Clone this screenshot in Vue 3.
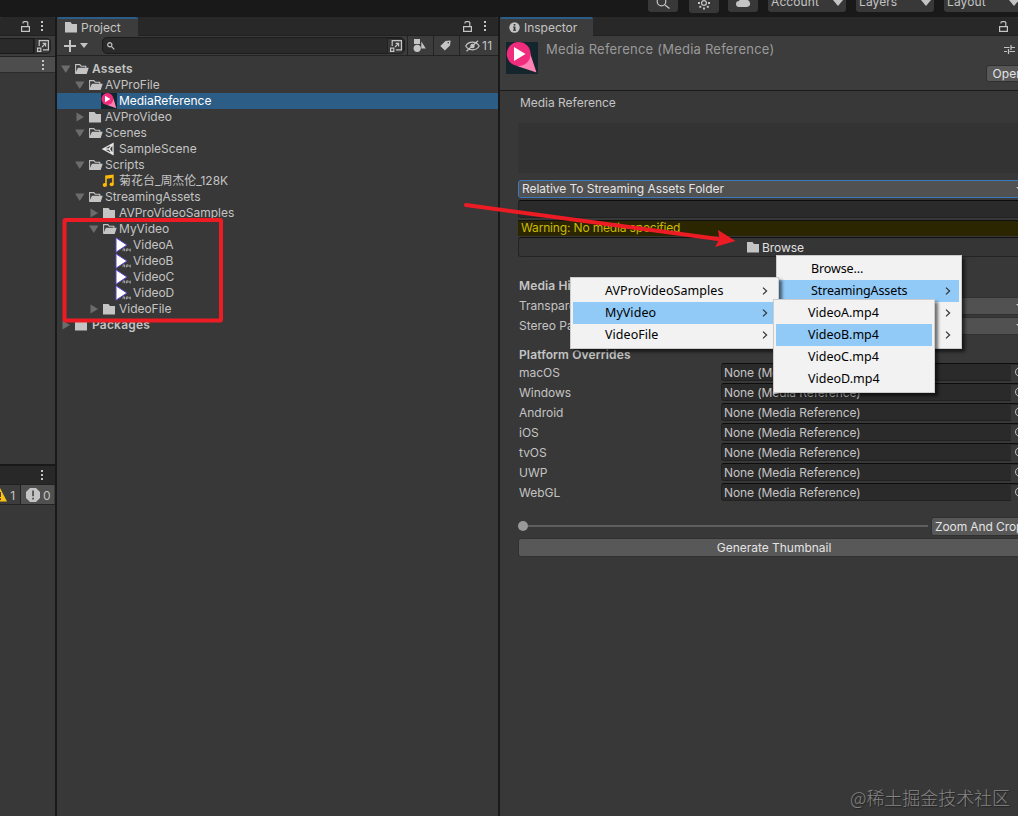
<template>
  <div class="editor">
    <header class="topbar">
      <div class="top-btn"><svg width="30" height="13"><circle cx="13.5" cy="1.5" r="4.3" /><path d="M17 5l4.5 3.5" /></svg></div>
      <div class="top-btn gear">
        <svg width="30" height="13">
          <circle cx="15" cy="3" r="2.4" />
          <g class="fill"><rect x="14" y="7.5" width="2" height="2" /><rect x="9" y="2" width="2" height="2" /><rect x="19" y="2" width="2" height="2" /><rect x="10.3" y="5.8" width="2" height="2" /><rect x="17.8" y="5.8" width="2" height="2" /></g>
        </svg>
      </div>
      <div class="top-btn cloud"><svg width="30" height="12"><path class="fill" d="M11 7a3 3 0 0 1 0-6 4 4 0 0 1 7-1 3.5 3.5 0 0 1 1 7z" /></svg></div>
      <div v-for="label in topMenus" :key="label" class="top-drop">
        <span>{{ label }}</span><i class="caret"></i>
      </div>
    </header>

    <main class="panels">
      <section class="side">
        <div class="strip side-strip">
          <svg class="lock" viewBox="0 0 9 11"><path d="M.6 5.6h7.8v4.8H.6zM2 2.5V1.8q0-1.2 1.2-1.2h2.4q1.2 0 1.2 1.2v3.8" /></svg>
          <i class="kebab"></i>
        </div>
        <div class="side-tools">
          <div class="side-field"></div>
          <div class="pop-btn"><svg class="pop" viewBox="0 0 12 12"><path d="M2.2 6V.6h9.2v9.2H6M.6 8.2h3.2v3.2H.6zM5 7l3.6-3.6M5.6 3.4h3v3" /></svg></div>
        </div>
        <div class="side-row"><i class="kebab"></i></div>
        <div class="side-body"></div>
        <div class="strip console-strip"><i class="kebab"></i></div>
        <div class="console-bar">
          <div class="warn-count">
            <svg width="14" height="14" viewBox="0 0 14 14"><path d="M7 0l7 13.5H0z" fill="#fcc111" /><path d="M6.2 4h1.7v5H6.2zM6.2 10.2h1.7v1.7H6.2z" fill="#333" /></svg>
            <span>1</span>
          </div>
          <div class="err-count">
            <svg width="14" height="14" viewBox="0 0 14 14"><path d="M4 0h6l4 4v6l-4 4H4L0 10V4z" fill="#c4c4c4" /><path d="M6.2 2.5h1.7v5.8H6.2zM6.2 9.8h1.7v1.8H6.2z" fill="#4a4a4a" /></svg>
            <span>0</span>
          </div>
        </div>
        <div class="side-rest"></div>
      </section>

      <section class="project">
        <div class="strip">
          <div class="tab">
            <svg width="13" height="11" viewBox="0 0 13 11"><path :d="folder" fill="#c4c4c4" /></svg>
            <span>Project</span>
          </div>
          <div class="strip-end">
            <svg class="lock" viewBox="0 0 9 11"><path d="M.6 5.6h7.8v4.8H.6zM2 2.5V1.8q0-1.2 1.2-1.2h2.4q1.2 0 1.2 1.2v3.8" /></svg>
            <i class="kebab"></i>
          </div>
        </div>
        <div class="tools">
          <svg class="plus" width="12" height="12"><path d="M6 0v12M0 6h12" /></svg>
          <i class="caret small"></i>
          <div class="search">
            <svg width="8" height="8" viewBox="0 0 8 8"><circle cx="2.8" cy="2.8" r="2.1" /><path d="M4.3 4.3l3 3" /></svg>
            <div class="pop-btn"><svg class="pop" viewBox="0 0 12 12"><path d="M2.2 6V.6h9.2v9.2H6M.6 8.2h3.2v3.2H.6zM5 7l3.6-3.6M5.6 3.4h3v3" /></svg></div>
          </div>
          <div class="tool"><svg width="13" height="13" viewBox="0 0 13 13"><path class="fill" d="M1 0h6v5H1zM8.3 2.5L12.8 9.5H8.3z" /><circle class="fill" cx="4.2" cy="9.3" r="3.6" /></svg></div>
          <div class="tool"><svg width="11" height="11" viewBox="0 0 11 11"><path class="fill" d="M5.5 1l4.5-.6q.7 0 .6.7L10 5.4 4.8 10.6 .3 6.1z" /><circle class="hole" cx="8.3" cy="2.7" r=".8" /></svg></div>
          <div class="tool hidden-count">
            <svg width="15" height="12" viewBox="0 0 15 12"><path d="M.7 6Q3 2.2 7.3 2.2T14.2 6Q12 9.8 7.5 9.8T.7 6zM1.5 11.2L13 .8" /><circle class="fill" cx="7.5" cy="6" r="2.2" /></svg>
            <span>11</span>
          </div>
        </div>
        <ul class="tree">
          <li v-for="node in tree" :key="node.name" :class="['lv' + node.level, { selected: node.selected, bold: node.level === 0 }]">
            <svg class="arrow" viewBox="0 0 14 16">
              <path v-if="node.arrow === 'open'" d="M2 4.5h9.5L6.8 12z" />
              <path v-if="node.arrow === 'closed'" d="M3.5 3.5v9l7.5-4.5z" />
            </svg>
            <svg class="node-icon" viewBox="0 0 16 16">
              <path v-if="node.icon === 'folder'" transform="translate(2 3)" :d="folder" fill="#c4c4c4" />
              <g v-else-if="node.icon === 'open'">
                <path d="M2.6 12.5V3.6h4.2l1.4 1.6h4.6V7" fill="none" stroke="#c4c4c4" stroke-width="1.1" />
                <path d="M4.9 6.8h10.8l-2 6.2H2.1z" fill="#c4c4c4" />
              </g>
              <g v-else-if="node.icon === 'media'">
                <rect width="16" height="16" fill="#14252c" />
                <path d="M12.5 5.5L15.3 15.3 6 12z" fill="#ff82b4" />
                <circle cx="6.4" cy="6" r="5.9" fill="#f02c7c" />
                <path d="M4 2.8v6.4L9.4 6z" fill="#fff" />
              </g>
              <g v-else-if="node.icon === 'scene'" fill="none" stroke="#e6e6e6" stroke-width="1.3">
                <path d="M2 8l10-5.3v10.600zM2 8h6.200M8.200 8L12 2.700M8.200 8L12 13.300" />
              </g>
              <g v-else-if="node.icon === 'audio'" fill="#fcb90a">
                <path d="M4.2 2.5l8.500-1V11h-1.600V5L5.800 5.700v6.800H4.200z" />
                <ellipse cx="3.8" cy="12" rx="2.1" ry="1.9" /><ellipse cx="10.7" cy="11.3" rx="2.1" ry="1.9" />
              </g>
              <g v-else>
                <path d="M1 .8v14.4L12 8z" fill="#fff" stroke="#5b45c8" stroke-width="1" />
                <rect x="7.5" y="11" width="8" height="4" fill="#333" />
                <path d="M8 14.3v-2.500h1.500v2M9.800 12v2.300M11.500 14.500v-2.700H13v1.500h-1.500M14 11.800v1.500h1.500M15.300 11.500v3" fill="none" stroke="#bbb" stroke-width=".7" />
              </g>
            </svg>
            <span>{{ node.name }}</span>
          </li>
        </ul>
      </section>

      <section class="inspector">
        <div class="strip">
          <div class="tab info-tab">
            <svg width="11" height="11" viewBox="0 0 11 11"><circle cx="5.5" cy="5.5" r="5.2" fill="#c4c4c4" /><path d="M4.7 2h1.7v1.6H4.7zM4 4.6h2.4v3.2h.7v1H4v-1h.7V5.6H4z" fill="#333" /></svg>
            <span>Inspector</span>
          </div>
          <div class="strip-end insp-end">
            <svg class="lock" viewBox="0 0 9 11"><path d="M.6 5.6h7.8v4.8H.6zM2 2.5V1.8q0-1.2 1.2-1.2h2.4q1.2 0 1.2 1.2v3.8" /></svg>
          </div>
        </div>
        <div class="insp-head">
          <svg class="asset" width="32" height="32" viewBox="0 0 32 32">
            <rect width="32" height="32" fill="#14252c" />
            <path d="M24 11L30.5 30.5 11 24z" fill="#ff82b4" />
            <circle cx="12.7" cy="12" r="11.9" fill="#f02c7c" />
            <path d="M8 5v14l11.5-7z" fill="#fff" />
          </svg>
          <h1>Media Reference (Media Reference)</h1>
          <div class="head-actions">
            <svg width="11" height="11" viewBox="0 0 11 11"><path d="M0 3.5h5.5M7.5 3.5H11M0 7.5h3M5.5 7.5H11M7 1v5M4.5 5v5" /></svg>
            <button class="open-btn">Open</button>
          </div>
        </div>
        <div class="insp-body">
          <div class="title">Media Reference</div>
          <div class="preview"></div>
          <div class="dropdown focused"><span>Relative To Streaming Assets Folder</span><i class="caret tiny"></i></div>
          <div class="path-field"></div>
          <div class="warning">Warning: No media specified</div>
          <div class="browse">
            <svg width="13" height="11" viewBox="0 0 13 11"><path :d="folder" fill="#c4c4c4" /></svg>
            <span>Browse</span>
          </div>
          <h2>Media Hints</h2>
          <div class="prop"><label>Transparency</label><div class="dropdown"><i class="caret tiny"></i></div></div>
          <div class="prop"><label>Stereo Packing</label><div class="dropdown"><i class="caret tiny"></i></div></div>
          <h2 class="platform-title">Platform Overrides</h2>
          <div v-for="name in platforms" :key="name" class="prop">
            <label>{{ name }}</label>
            <div class="object"><span>None (Media Reference)</span><div class="pick"><i></i></div></div>
          </div>
          <div class="slider-row">
            <div class="slider"><i class="knob"></i><i class="track"></i></div>
            <button class="zoom-btn">Zoom And Crop</button>
          </div>
          <button class="generate">Generate Thumbnail</button>
        </div>
      </section>
    </main>

    <div v-for="menu in menus" :key="menu.id" :class="['menu', menu.id]">
      <div v-for="(item, i) in menu.items" :key="i" :class="['item', { active: i === menu.active }]">
        <span>{{ item.text }}</span>
        <svg v-if="item.sub" width="6" height="8" viewBox="0 0 6 8"><path d="M1 .6L4.6 4 1 7.4" /></svg>
      </div>
    </div>

    <svg class="marks" width="1018" height="816">
      <rect x="64.5" y="220" width="156.5" height="100.5" rx="1" />
      <path d="M466 205L718 239" />
      <path class="head" d="M735.5 241L718 230l1.5 9.3L715 247z" />
    </svg>
    <div class="watermark">@稀土掘金技术社区</div>
  </div>
</template>

<script setup>
const folder = 'M0 0h5.5l1.5 2h5v8.500H0z'

const topMenus = ['Account', 'Layers', 'Layout']

const tree = [
  { name: 'Assets', level: 0, arrow: 'open', icon: 'open' },
  { name: 'AVProFile', level: 1, arrow: 'open', icon: 'open' },
  { name: 'MediaReference', level: 2, icon: 'media', selected: true },
  { name: 'AVProVideo', level: 1, arrow: 'closed', icon: 'folder' },
  { name: 'Scenes', level: 1, arrow: 'open', icon: 'open' },
  { name: 'SampleScene', level: 2, icon: 'scene' },
  { name: 'Scripts', level: 1, arrow: 'open', icon: 'open' },
  { name: '菊花台_周杰伦_128K', level: 2, icon: 'audio' },
  { name: 'StreamingAssets', level: 1, arrow: 'open', icon: 'open' },
  { name: 'AVProVideoSamples', level: 2, arrow: 'closed', icon: 'folder' },
  { name: 'MyVideo', level: 2, arrow: 'open', icon: 'open' },
  { name: 'VideoA', level: 3, icon: 'video' },
  { name: 'VideoB', level: 3, icon: 'video' },
  { name: 'VideoC', level: 3, icon: 'video' },
  { name: 'VideoD', level: 3, icon: 'video' },
  { name: 'VideoFile', level: 2, arrow: 'closed', icon: 'folder' },
  { name: 'Packages', level: 0, arrow: 'closed', icon: 'folder' },
]

const platforms = ['macOS', 'Windows', 'Android', 'iOS', 'tvOS', 'UWP', 'WebGL']

const menus = [
  {
    id: 'menu-root',
    active: 1,
    items: [{ text: 'Browse...' }, { text: 'StreamingAssets', sub: true }, { text: '', sub: true }, { text: '', sub: true }],
  },
  {
    id: 'menu-folders',
    active: 1,
    items: [{ text: 'AVProVideoSamples', sub: true }, { text: 'MyVideo', sub: true }, { text: 'VideoFile', sub: true }],
  },
  {
    id: 'menu-files',
    active: 1,
    items: [{ text: 'VideoA.mp4' }, { text: 'VideoB.mp4' }, { text: 'VideoC.mp4' }, { text: 'VideoD.mp4' }],
  },
]
</script>

<style>
body { margin: 0; background: #191919; }
</style>

<style scoped>
.editor {
  position: relative;
  width: 1018px;
  height: 816px;
  overflow: hidden;
  display: flex;
  flex-direction: column;
  background: #191919;
  color: #c4c4c4;
  font: 12px/16px Inter, "Noto Sans CJK SC", sans-serif;
  letter-spacing: -.02px;
  white-space: nowrap;
}
.editor * { box-sizing: border-box; }
svg { display: block; flex-shrink: 0; fill: none; stroke: #c4c4c4; stroke-width: 1.2; }
.fill { fill: #c4c4c4; stroke: none; }
.hole { fill: #3c3c3c; stroke: none; }
button { font: inherit; letter-spacing: inherit; color: #e4e4e4; padding: 0; cursor: pointer; }

.topbar { height: 17px; flex-shrink: 0; display: flex; align-items: flex-start; padding-left: 648px; }
.top-btn { width: 30px; height: 12px; flex-shrink: 0; background: #383838; border-radius: 0 0 3px 3px; margin-right: 11px; }
.top-btn.gear { height: 13px; margin-right: 9px; }
.top-btn.cloud { margin-right: 10px; }
.top-drop {
  width: 78px;
  height: 12px;
  flex-shrink: 0;
  margin-right: 10px;
  padding: 0 3px;
  display: flex;
  justify-content: space-between;
  background: #383838;
  border-radius: 0 0 3px 3px;
  letter-spacing: .1px;
  overflow: hidden;
}
.top-drop span { margin-top: -6px; }
.caret { border: 5px solid transparent; border-top: 6px solid #c4c4c4; border-bottom: 0; width: 0; height: 0; flex-shrink: 0; }
.caret.small { border-width: 5px 4.5px 0; }
.caret.tiny { border-width: 4px 4px 0; margin-left: auto; }

.panels { flex: 1; display: flex; gap: 2px; min-height: 0; }
.panels > section { display: flex; flex-direction: column; background: #383838; overflow: hidden; flex-shrink: 0; }
.strip { height: 19px; flex-shrink: 0; background: #282828; display: flex; align-items: center; border-radius: 3px 3px 0 0; box-shadow: inset 0 -1px #212121; }
.tab {
  height: 19px;
  width: 81px;
  padding-left: 8px;
  display: flex;
  align-items: center;
  gap: 3px;
  background: #3c3c3c;
  border-top: 2px solid #2c5d87;
  border-radius: 2px 2px 0 0;
}
.tab svg { stroke: none; }
.tab span { margin-top: 1px; }
.lock { width: 9px; height: 11px; }
.kebab { width: 2px; height: 2px; flex-shrink: 0; background: #c4c4c4; box-shadow: 0 -4px #c4c4c4, 0 4px #c4c4c4; }
.strip .kebab { margin-bottom: 1px; }
.strip-end { margin-left: auto; display: flex; align-items: center; gap: 12px; padding-right: 12px; }
.insp-end { padding-right: 10px; }

.side { width: 55px; }
.side-strip { padding: 0 12px 0 21px; justify-content: space-between; }
.side-tools { height: 21px; flex-shrink: 0; display: flex; align-items: center; background: #3c3c3c; border-bottom: 1px solid #222; }
.side-field { width: 34px; height: 16px; background: #2a2a2a; border: 1px solid #191919; border-left: 0; }
.pop-btn { width: 17px; height: 16px; display: flex; align-items: center; justify-content: center; background: #383838; border: 1px solid #212121; border-radius: 0 4px 4px 0; }
.pop { width: 12px; height: 12px; }
.side-row { height: 16px; flex-shrink: 0; display: flex; align-items: center; justify-content: flex-end; padding-right: 11px; background: #4d4d4d; border-bottom: 1px solid #2b2b2b; }
.side-body { height: 391px; flex-shrink: 0; }
.console-strip { height: 21px; justify-content: flex-end; padding-right: 12px; border-top: 2px solid #191919; border-radius: 0; }
.console-bar { height: 20px; flex-shrink: 0; display: flex; background: #3c3c3c; border-bottom: 1px solid #232323; }
.console-bar svg { stroke: none; }
.console-bar > div { display: flex; align-items: center; gap: 3px; }
.console-bar span { margin-top: 2px; }
.warn-count { width: 21px; justify-content: flex-end; padding-right: 5px; border-right: 1px solid #232323; }
.err-count { width: 33px; padding-left: 5px; background: #505050; }
.side-rest { flex: 1; }

.project { width: 441px; }
.tools { height: 20px; flex-shrink: 0; display: flex; align-items: center; background: #3c3c3c; border-bottom: 1px solid #232323; padding-left: 7px; }
.plus { stroke-width: 2; margin-right: 4px; }
.search { width: 303px; height: 17px; margin: 0 2px 0 14px; padding-left: 4px; display: flex; align-items: center; justify-content: space-between; background: #2a2a2a; border: 1px solid #1c1c1c; border-radius: 5px; }
.tool { width: 26px; height: 20px; padding-right: 2px; display: flex; align-items: center; justify-content: center; border-left: 1px solid #232323; }
.tool.hidden-count { width: 39px; gap: 2px; justify-content: flex-start; padding: 0 0 0 5px; letter-spacing: .4px; }
.tree { list-style: none; margin: 0; padding: 5px 0 0; }
.tree li { height: 16px; display: flex; align-items: center; }
.tree svg { stroke: none; }
.lv0 { padding-left: 2px; }
.lv1 { padding-left: 16px; }
.lv2 { padding-left: 30px; }
.lv3 { padding-left: 44px; }
.bold { font-weight: 600; letter-spacing: .2px; }
.bold span { margin-left: 1px; }
.selected { background: #2c5d87; color: #fff; }
.arrow { width: 14px; height: 16px; }
.arrow path { fill: #6c6c6c; }
.node-icon { width: 16px; height: 16px; margin-right: 2px; }

.inspector { width: 518px; }
.info-tab { width: 93px; padding-left: 9px; gap: 4px; }
.insp-head { height: 55px; flex-shrink: 0; display: flex; padding: 6px 0 0 6px; background: #3c3c3c; border-bottom: 1px solid #1a1a1a; }
.asset { stroke: none; }
h1 { margin: 0 0 0 8px; font-size: 13px; font-weight: 400; line-height: 15px; color: #9a9a9a; letter-spacing: .22px; }
.head-actions { width: 42px; flex-shrink: 0; margin: 2px -11px 0 auto; display: flex; flex-direction: column; gap: 10px; }
.head-actions svg { margin-left: 17px; }
.open-btn { width: 44px; height: 17px; margin-left: -1px; background: #585858; border: 1px solid #303030; border-radius: 3px; line-height: 15px; letter-spacing: .15px; }
.insp-body { width: 511px; margin-left: 18px; display: flex; flex-direction: column; }
.title { margin: 4px 0 12px 2px; }
.preview { height: 50px; background: #333; margin-bottom: 7px; }
.dropdown { height: 18px; display: flex; align-items: center; padding: 0 4px 0 3px; background: #515151; border: 1px solid #303030; border-radius: 3px; }
.focused { border-color: #3a79bb; color: #e4e4e4; letter-spacing: -.04px; }
.path-field { height: 18px; margin-top: 2px; background: #2a2a2a; border: 1px solid #212121; border-top-color: #0d0d0d; border-radius: 3px; }
.warning { height: 16px; line-height: 14px; margin-top: 2px; padding-left: 3px; background: #2c2600; border-top: 1px solid #111; color: #cabc00; letter-spacing: -.16px; }
.browse { height: 20px; margin-top: 1px; padding: 1px 0 0 4px; display: flex; align-items: center; justify-content: center; gap: 2px; border: 1px solid #232323; border-top-color: #111; border-radius: 3px; background: #353535; color: #e0e0e0; }
.browse svg { stroke: none; margin-top: -1px; }
h2 { margin: 21px 0 2px 1px; font-size: 12px; line-height: 16px; font-weight: 600; letter-spacing: .13px; }
h2.platform-title { margin: 11px 0 0 1px; }
.prop { height: 20px; display: flex; align-items: center; }
.prop label { width: 203px; padding-left: 1px; }
.prop > div { flex: 1; height: 18px; }
.prop > .object { align-self: flex-start; padding-top: 1px; }
.object { display: flex; align-items: center; background: #2a2a2a; border: 1px solid #212121; border-top-color: #0d0d0d; border-radius: 3px; padding-left: 2px; letter-spacing: -.08px; }
.pick { margin-left: auto; width: 17px; height: 16px; padding: 2px 0 0 4px; background: #373737; }
.pick i { display: block; width: 10px; height: 10px; border: 1px solid #c4c4c4; border-radius: 50%; }
.slider-row { height: 20px; margin-top: 13px; display: flex; align-items: center; }
.slider { width: 410px; display: flex; align-items: center; margin-right: 4px; }
.knob { width: 10px; height: 10px; border-radius: 50%; background: #999; }
.track { flex: 1; height: 2px; background: #5e5e5e; }
.zoom-btn { width: 97px; height: 19px; margin: 1px 0 0 -1px; padding-left: 3px; text-align: left; background: #585858; border: 1px solid #303030; border-radius: 3px; letter-spacing: -.1px; }
.generate { height: 19px; margin-top: 2px; padding-left: 1px; background: #585858; border: 1px solid #303030; border-radius: 3px; }

.menu {
  position: absolute;
  padding: 2px;
  background: #f2f2f2;
  border: 1px solid #ccc;
  box-shadow: 3px 3px 3px rgba(0, 0, 0, .55);
  color: #000;
  font: 12.5px/22px "Noto Sans", sans-serif;
  letter-spacing: 0;
}
.menu-root { left: 776px; top: 255px; width: 186px; letter-spacing: -.12px; }
.menu-folders { left: 570px; top: 277px; width: 209px; letter-spacing: .05px; }
.menu-files { left: 773px; top: 299px; width: 162px; }
.item { height: 22px; display: flex; align-items: center; justify-content: space-between; padding: 0 8px 0 32px; }
.item.active { background: #91c9f7; }
.item svg { stroke: #333; }

.marks { position: absolute; left: 0; top: 0; pointer-events: none; stroke: #ed1c24; stroke-width: 4; stroke-linecap: round; }
.marks .head { fill: #ed1c24; stroke: none; }
.watermark {
  position: absolute;
  right: 8px;
  bottom: 6px;
  font: 300 18px/26px "Noto Sans CJK SC", sans-serif;
  letter-spacing: -.05px;
  color: #858585;
  text-shadow: 1px 1px 1px #222;
}
</style>
